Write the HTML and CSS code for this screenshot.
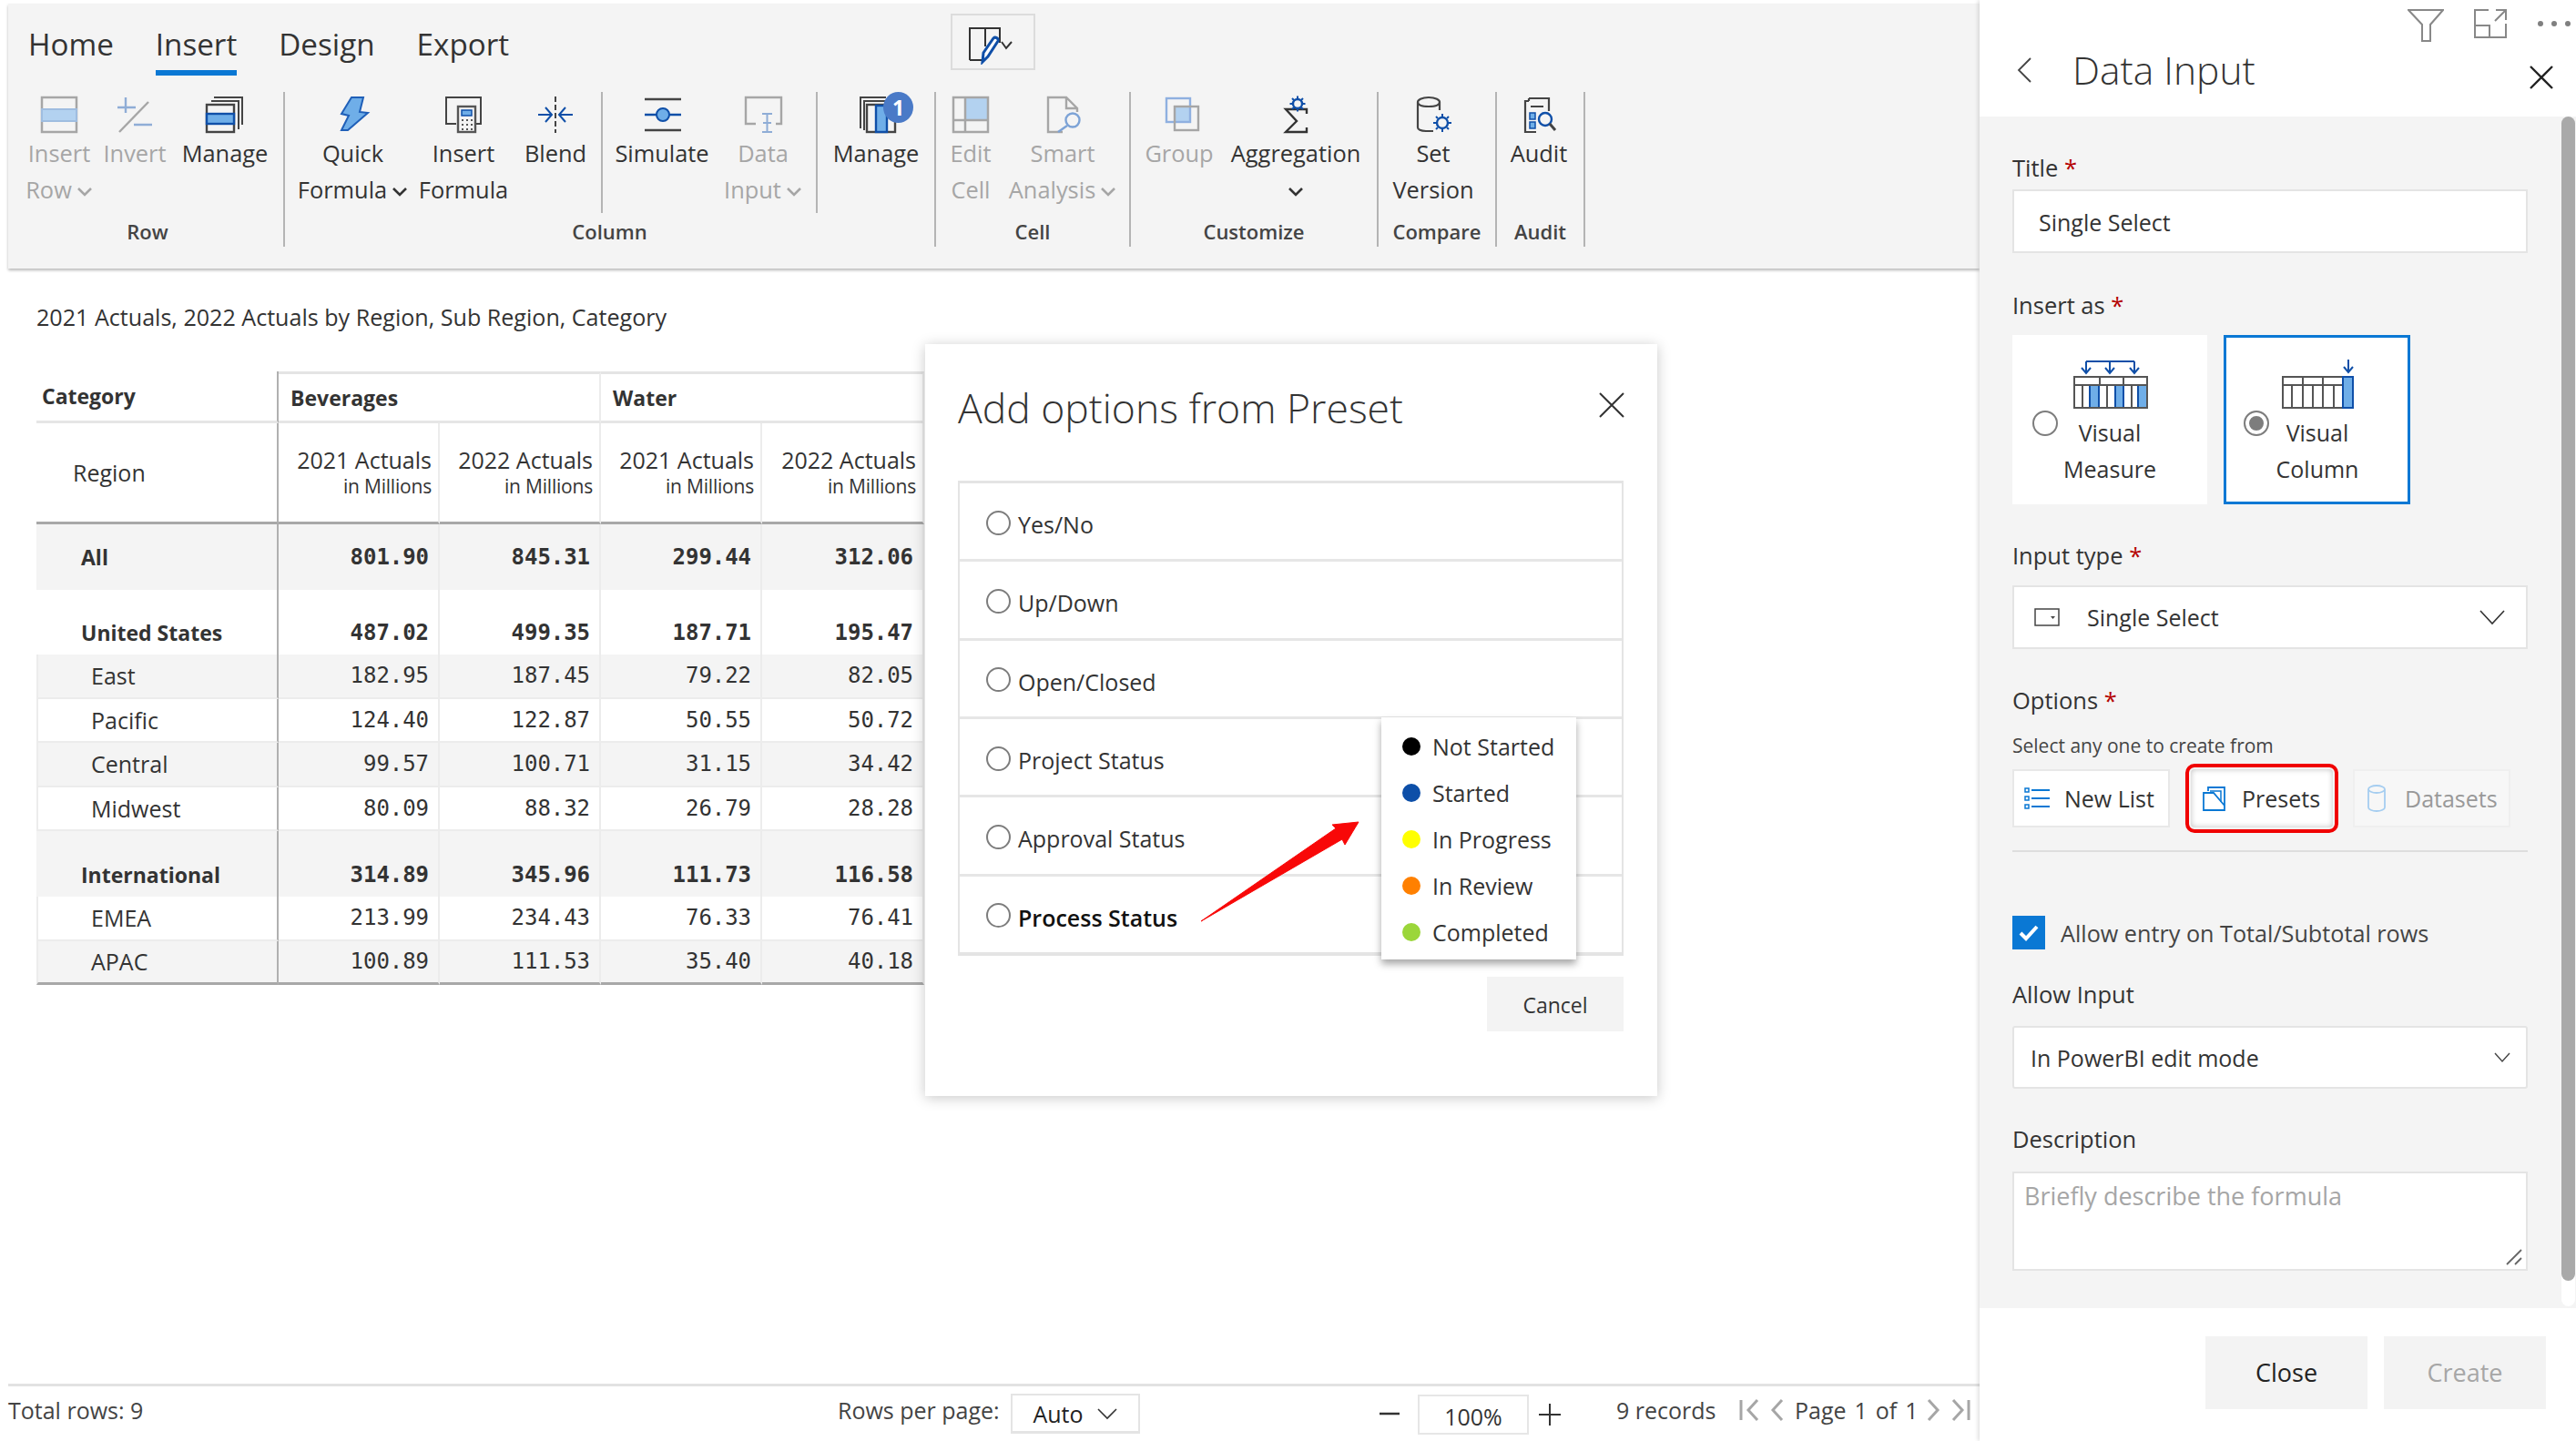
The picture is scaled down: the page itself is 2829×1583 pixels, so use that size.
FILE: index.html
```html
<!DOCTYPE html>
<html lang="en">
<head>
<meta charset="utf-8">
<title>Data Input</title>
<link rel="stylesheet" href="styles.css">
</head>
<body>
<div class="app">
  <main class="main">
    <header class="ribbon">
      <div class="tabs">
        <span class="tab">Home</span>
        <span class="tab tab--active">Insert</span>
        <span class="tab">Design</span>
        <span class="tab">Export</span>
        <button class="toolbox">
          <svg width="62" height="44" viewBox="0 0 62 44" fill="none"><path d="M9 39V4H42V20M9 39H23M26 4V24" stroke="#333" stroke-width="2"/><path d="M23 41l1-10 11-16c2-2 6 0 5 3L29 35z" fill="#fff" stroke="#0f4fa8" stroke-width="3"/><path d="M44 19l5 7 6-7" stroke="#333" stroke-width="2"/></svg>
        </button>
      </div>
      <div class="groups">
        <section class="group g-row">
          <div class="items">
            <div class="item w80 off">
              <svg class="ico" viewBox="0 0 50 48" fill="none"><rect x="6" y="6" width="38" height="38" stroke="#a6a6a6" stroke-width="2.5"/><rect x="6" y="19" width="38" height="13" fill="#b3d2f0" stroke="#9fbde0" stroke-width="2"/></svg>
              <span>Insert</span><span>Row<svg class="chev" viewBox="0 0 18 12"><path d="M2 2l7 7 7-7" fill="none" stroke="currentColor" stroke-width="2.6"/></svg></span>
            </div>
            <div class="item w86 off">
              <svg class="ico" viewBox="0 0 50 48" fill="none"><path d="M6 17H26M15 6V23M24 36H44" stroke="#8fadd6" stroke-width="2.4"/><path d="M8 44L40 11" stroke="#a6a6a6" stroke-width="2.4"/></svg>
              <span>Invert</span>
            </div>
            <div class="item w112">
              <svg class="ico" viewBox="0 0 50 48" fill="none"><path d="M13 6H44V36M10 10H40V41" stroke="#444" stroke-width="2"/><rect x="5" y="14" width="30" height="30" fill="#f4f4f4" stroke="#444" stroke-width="2.4"/><rect x="5" y="24" width="30" height="11" fill="#6faee8" stroke="#0f4fa8" stroke-width="2.4"/></svg>
              <span>Manage</span>
            </div>
          </div>
          <div class="glabel">Row</div>
        </section>
        <section class="group g-col">
          <div class="items">
            <div class="item w149">
              <svg class="ico" viewBox="0 0 50 48" fill="none"><path d="M23 6H36L32 22L41 23L19 42H12L20 26L12 24Z" fill="#6faee8" stroke="#1f5fb8" stroke-width="2"/></svg>
              <span>Quick</span><span>Formula<svg class="chev" viewBox="0 0 18 12"><path d="M2 2l7 7 7-7" fill="none" stroke="currentColor" stroke-width="2.6"/></svg></span>
            </div>
            <div class="item w94">
              <svg class="ico" viewBox="0 0 50 48" fill="none"><path d="M17 35H6V6H44V35H39" stroke="#444" stroke-width="2"/><rect x="19" y="16" width="19" height="28" fill="#f4f4f4" stroke="#555" stroke-width="2.4"/><rect x="23" y="20" width="11" height="6" fill="#6faee8" stroke="#0f4fa8" stroke-width="1.5"/><path d="M23 31h2M28 31h2M33 31h2M23 36h2M28 36h2M33 36h2M23 41h2M28 41h2M33 41h2" stroke="#555" stroke-width="2"/></svg>
              <span>Insert</span><span>Formula</span>
            </div>
            <div class="item w100">
              <svg class="ico" viewBox="0 0 50 48" fill="none"><path d="M25 5V45" stroke="#444" stroke-width="2" stroke-dasharray="6 3"/><path d="M6 25H20M14 17L21 25L14 33M44 25H30M36 17L29 25L36 33" stroke="#0f4fa8" stroke-width="2"/></svg>
              <span>Blend</span>
            </div>
            <i class="sep"></i>
            <div class="item w130">
              <svg class="ico" viewBox="0 0 50 48" fill="none"><path d="M6 8H46M6 42H46" stroke="#444" stroke-width="2.4"/><path d="M6 25H46" stroke="#0f4fa8" stroke-width="2.4"/><circle cx="26" cy="25" r="7" fill="#6faee8" stroke="#0f4fa8" stroke-width="2"/></svg>
              <span>Simulate</span>
            </div>
            <div class="item w92 off">
              <svg class="ico" viewBox="0 0 50 48" fill="none"><path d="M17 35H6V6H45V35H39" stroke="#a6a6a6" stroke-width="2.4"/><path d="M24 24H35M24 44H35M29.500 24V44M25 34H34" stroke="#8fadd6" stroke-width="2"/></svg>
              <span>Data</span><span>Input<svg class="chev" viewBox="0 0 18 12"><path d="M2 2l7 7 7-7" fill="none" stroke="currentColor" stroke-width="2.6"/></svg></span>
            </div>
            <i class="sep sep--gap"></i>
            <div class="item w128 has-badge">
              <svg class="ico" viewBox="0 0 50 48" fill="none"><path d="M8 40V6H36M12 42V10H36" stroke="#444" stroke-width="2"/><rect x="15" y="14" width="31" height="30" fill="#f4f4f4" stroke="#444" stroke-width="2.4"/><rect x="25" y="15" width="12" height="29" fill="#6faee8" stroke="#0f4fa8" stroke-width="2.4"/></svg>
              <b class="badge">1</b>
              <span>Manage</span>
            </div>
          </div>
          <div class="glabel">Column</div>
        </section>
        <section class="group g-cell">
          <div class="items">
            <div class="item w76 off">
              <svg class="ico" viewBox="0 0 50 48" fill="none"><rect x="19" y="7" width="25" height="24" fill="#b3d2f0"/><rect x="6" y="6" width="38" height="38" stroke="#a6a6a6" stroke-width="2.5"/><path d="M19 6V44M6 31H44" stroke="#a6a6a6" stroke-width="2.5"/></svg>
              <span>Edit</span><span>Cell</span>
            </div>
            <div class="item w126 off">
              <svg class="ico" viewBox="0 0 50 48" fill="none"><path d="M25 44H9V6H29L41 18V22M29 6V18H41" stroke="#a6a6a6" stroke-width="2.4"/><circle cx="36" cy="31" r="7.500" stroke="#7da3d6" stroke-width="2.400"/><path d="M30 37L20 44" stroke="#7da3d6" stroke-width="2.4"/></svg>
              <span>Smart</span><span>Analysis<svg class="chev" viewBox="0 0 18 12"><path d="M2 2l7 7 7-7" fill="none" stroke="currentColor" stroke-width="2.6"/></svg></span>
            </div>
          </div>
          <div class="glabel">Cell</div>
        </section>
        <section class="group g-custom">
          <div class="items">
            <div class="item w106 off">
              <svg class="ico" viewBox="0 0 50 48" fill="none"><rect x="20" y="16" width="17" height="17" fill="#b3d2f0"/><rect x="11" y="7" width="26" height="26" stroke="#8fb0e0" stroke-width="2.4"/><rect x="20" y="16" width="26" height="26" stroke="#a6a6a6" stroke-width="2.4"/></svg>
              <span>Group</span>
            </div>
            <div class="item w150">
              <svg class="ico" viewBox="0 0 50 48" fill="none"><path d="M37 24V19H14L26 32L14 44H37V39" stroke="#333" stroke-width="2.4"/><circle cx="27" cy="13" r="5" stroke="#0f4fa8" stroke-width="2.400"/><path d="M27 4.500V7M27 19V21.500M18.500 13H21M33 13H35.500M21 7L23 9M33 7L31 9M21 19L23 17M33 19L31 17" stroke="#0f4fa8" stroke-width="2"/></svg>
              <span>Aggregation</span><span class="dark-chev"><svg class="chev" viewBox="0 0 18 12"><path d="M2 2l7 7 7-7" fill="none" stroke="currentColor" stroke-width="2.6"/></svg></span>
            </div>
          </div>
          <div class="glabel">Customize</div>
        </section>
        <section class="group g-compare">
          <div class="items">
            <div class="item w120">
              <svg class="ico" viewBox="0 0 50 48" fill="none"><path d="M25 43H17C11 43 8 41 8 39V11C8 9 12 6 20 6S32 9 32 11V20M8 11C8 14 12 16 20 16S32 14 32 11" stroke="#444" stroke-width="2.2"/><circle cx="35" cy="34" r="6" stroke="#0f4fa8" stroke-width="2.400"/><path d="M35 24V27M35 41V44M25 34H28M42 34H45M28 27L30 29M42 27L40 29M28 41L30 39M42 41L40 39" stroke="#0f4fa8" stroke-width="2"/></svg>
              <span>Set</span><span>Version</span>
            </div>
          </div>
          <div class="glabel">Compare</div>
        </section>
        <section class="group g-audit">
          <div class="items">
            <div class="item w92">
              <svg class="ico" viewBox="0 0 50 48" fill="none"><path d="M14 7H36V21M14 7V10M22 44H10V10H14M16 16H30" stroke="#444" stroke-width="2.200"/><path d="M15 23H21V30H15ZM15 33H21V40H15Z" fill="#6faee8" stroke="#0f4fa8" stroke-width="1.500"/><circle cx="32" cy="30" r="7" fill="#f4f4f4" stroke="#0f4fa8" stroke-width="2.400"/><path d="M37 35L43 42" stroke="#444" stroke-width="3"/></svg>
              <span>Audit</span>
            </div>
          </div>
          <div class="glabel">Audit</div>
        </section>
      </div>
    </header>

    <section class="content">
      <h2 class="report-title">2021 Actuals, 2022 Actuals by Region, Sub Region, Category</h2>
      <table class="grid">
        <colgroup><col class="c0"><col class="c1"><col class="c2"><col class="c3"><col class="c4"></colgroup>
        <thead>
          <tr class="h1">
            <th class="lab cat">Category</th>
            <th class="grp" colspan="2">Beverages</th>
            <th class="grp" colspan="2">Water</th>
          </tr>
          <tr class="h2">
            <th class="lab reg">Region</th>
            <th class="meas">2021 Actuals<small>in Millions</small></th>
            <th class="meas">2022 Actuals<small>in Millions</small></th>
            <th class="meas">2021 Actuals<small>in Millions</small></th>
            <th class="meas">2022 Actuals<small>in Millions</small></th>
          </tr>
        </thead>
        <tbody>
          <tr class="total shade tall"><td class="lab">All</td><td>801.90</td><td>845.31</td><td>299.44</td><td>312.06</td></tr>
          <tr class="total gapped"><td class="lab">United States</td><td>487.02</td><td>499.35</td><td>187.71</td><td>195.47</td></tr>
          <tr class="leaf shade"><td class="lab">East</td><td>182.95</td><td>187.45</td><td>79.22</td><td>82.05</td></tr>
          <tr class="leaf"><td class="lab">Pacific</td><td>124.40</td><td>122.87</td><td>50.55</td><td>50.72</td></tr>
          <tr class="leaf shade"><td class="lab">Central</td><td>99.57</td><td>100.71</td><td>31.15</td><td>34.42</td></tr>
          <tr class="leaf"><td class="lab">Midwest</td><td>80.09</td><td>88.32</td><td>26.79</td><td>28.28</td></tr>
          <tr class="total gapped shade"><td class="lab">International</td><td>314.89</td><td>345.96</td><td>111.73</td><td>116.58</td></tr>
          <tr class="leaf"><td class="lab">EMEA</td><td>213.99</td><td>234.43</td><td>76.33</td><td>76.41</td></tr>
          <tr class="leaf shade last"><td class="lab">APAC</td><td>100.89</td><td>111.53</td><td>35.40</td><td>40.18</td></tr>
        </tbody>
      </table>
    </section>

    <footer class="statusbar">
      <span class="total-rows">Total rows: 9</span>
      <span class="rpp">Rows per page:</span>
      <span class="auto">Auto<svg width="24" height="14" viewBox="0 0 24 14"><path d="M2 2l10 10L22 2" fill="none" stroke="#333" stroke-width="1.600"/></svg></span>
      <svg class="zoom-minus" width="24" height="24" viewBox="0 0 24 24"><path d="M1 12H23" stroke="#333" stroke-width="2.500"/></svg>
      <span class="zoom-val">100%</span>
      <svg class="zoom-plus" width="26" height="26" viewBox="0 0 26 26"><path d="M1 13H25M13 1V25" stroke="#333" stroke-width="2"/></svg>
      <span class="records">9 records</span>
      <svg class="pg pg-first" width="26" height="28" viewBox="0 0 26 28" fill="none"><path d="M2 3V25" stroke="#a6a6a6" stroke-width="3"/><path d="M20 3L10 14L20 25" stroke="#a6a6a6" stroke-width="3"/></svg>
      <svg class="pg pg-prev" width="18" height="28" viewBox="0 0 18 28" fill="none"><path d="M14 3L4 14L14 25" stroke="#a6a6a6" stroke-width="3"/></svg>
      <span class="page-of">Page 1 of 1</span>
      <svg class="pg pg-next" width="18" height="28" viewBox="0 0 18 28" fill="none"><path d="M4 3L14 14L4 25" stroke="#a6a6a6" stroke-width="3"/></svg>
      <svg class="pg pg-last" width="24" height="28" viewBox="0 0 24 28" fill="none"><path d="M3 3L13 14L3 25" stroke="#a6a6a6" stroke-width="3"/><path d="M20 3V25" stroke="#a6a6a6" stroke-width="3"/></svg>
    </footer>
  </main>

  <aside class="panel">
    <div class="panel-tools">
      <svg width="40" height="36" viewBox="0 0 40 36" fill="none"><path d="M1 1H39L25 17V35H16V17Z" stroke="#888" stroke-width="2"/></svg>
      <svg width="36" height="32" viewBox="0 0 36 32" fill="none"><path d="M16 1H1V31H35V16M1 18H17V31M24 1H35V12M35 1L23 13" stroke="#888" stroke-width="2"/></svg>
      <svg class="dots" width="38" height="8" viewBox="0 0 38 8"><circle cx="4" cy="4" r="3" fill="#808080"/><circle cx="19" cy="4" r="3" fill="#808080"/><circle cx="34" cy="4" r="3" fill="#808080"/></svg>
    </div>
    <div class="panel-head">
      <svg class="back" width="16" height="28" viewBox="0 0 16 28" fill="none"><path d="M15 1L2 14L15 27" stroke="#444" stroke-width="1.800"/></svg>
      <h1 class="panel-title">Data Input</h1>
      <svg class="panel-x" width="28" height="28" viewBox="0 0 28 28" fill="none"><path d="M2 2L26 26M26 2L2 26" stroke="#222" stroke-width="2.400"/></svg>
    </div>
    <div class="panel-body">
      <div class="scrollbar"><i></i></div>
      <label class="flabel m-title">Title <em>*</em></label>
      <div class="fbox fbox-title">Single Select</div>

      <label class="flabel m-gap">Insert as <em>*</em></label>
      <div class="cards">
        <div class="card">
          <span class="radio"></span>
          <div class="card-main">
            <svg class="measure-ico" width="84" height="56" viewBox="0 0 84 56" fill="none"><path d="M14 3V14M40 3V14M67 3V14M14 3H67" stroke="#0f4fa8" stroke-width="2"/><path d="M9 10L14 16L19 10M35 10L40 16L45 10M62 10L67 16L72 10" stroke="#0f4fa8" stroke-width="2"/><path d="M18 29H28V54H18ZM46 29H55V54H46ZM71 29H81V54H71Z" fill="#6faee8" stroke="#0f4fa8" stroke-width="2"/><path d="M1 20H81V54H1ZM1 29H81M29 20V29M55 20V29M10 29V54M37 29V54M64 29V54" stroke="#555" stroke-width="2"/></svg>
            <span>Visual</span><span>Measure</span>
          </div>
        </div>
        <div class="card card--on">
          <span class="radio radio--on"></span>
          <div class="card-main">
            <svg class="measure-ico" width="84" height="56" viewBox="0 0 84 56" fill="none"><path d="M74 1V14M69 9L74 15L79 9" stroke="#0f4fa8" stroke-width="2"/><path d="M2 20H68V54H2ZM2 29H68M24 20V29M46 20V29M12 29V54M24 29V54M35 29V54M46 29V54M58 29V54" stroke="#555" stroke-width="2"/><rect x="68" y="20" width="11" height="34" fill="#6faee8" stroke="#0f4fa8" stroke-width="2"/></svg>
            <span>Visual</span><span>Column</span>
          </div>
        </div>
      </div>

      <label class="flabel m-type">Input type <em>*</em></label>
      <div class="fbox fbox-select">
        <svg class="sel-ico" width="28" height="20" viewBox="0 0 28 20" fill="none"><rect x="1" y="1" width="26" height="18" stroke="#444" stroke-width="1.500"/><path d="M18 9h5l-2.500 3z" fill="#444"/></svg>
        <span>Single Select</span>
        <svg class="sel-chev" width="28" height="18" viewBox="0 0 28 18" fill="none"><path d="M1 2L14 16L27 2" stroke="#333" stroke-width="1.600"/></svg>
      </div>

      <label class="flabel m-options">Options <em>*</em></label>
      <p class="hint">Select any one to create from</p>
      <div class="sources">
        <div class="src src-new">
          <svg width="28" height="24" viewBox="0 0 28 24" fill="none"><path d="M8 3H28M8 12H28M8 21H28" stroke="#0a78d4" stroke-width="1.800"/><path d="M1 1h4v4H1zM1 10h4v4H1zM1 19h4v4H1z" stroke="#0a78d4" stroke-width="1.500"/></svg>
          New List
        </div>
        <div class="src src-presets">
          <svg width="26" height="28" viewBox="0 0 26 28" fill="none"><path d="M6 6V2H24V27M1 27V8H12L24 22V27Z" stroke="#0a78d4" stroke-width="1.800"/><path d="M8 6H20V18" stroke="#0a78d4" stroke-width="1.500"/></svg>
          Presets
        </div>
        <div class="src src-data">
          <svg width="20" height="30" viewBox="0 0 20 30" fill="none"><path d="M1 5V25C1 27 5 29 10 29S19 27 19 25V5C19 3 15 1 10 1S1 3 1 5ZM1 5C1 7 5 9 10 9S19 7 19 5" stroke="#a5cdf0" stroke-width="1.800"/></svg>
          Datasets
        </div>
      </div>
      <hr class="rule">

      <div class="check">
        <span class="checkbox"><svg width="24" height="20" viewBox="0 0 24 20" fill="none"><path d="M3 10L9 16L21 3" stroke="#fff" stroke-width="4"/></svg></span>
        <span>Allow entry on Total/Subtotal rows</span>
      </div>

      <label class="flabel m-allow">Allow Input</label>
      <div class="fbox fbox-allow">
        <span>In PowerBI edit mode</span>
        <svg width="18" height="12" viewBox="0 0 18 12" fill="none"><path d="M1 1L9 10L17 1" stroke="#444" stroke-width="1.400"/></svg>
      </div>

      <label class="flabel m-desc">Description</label>
      <div class="fbox fbox-desc">
        <span>Briefly describe the formula</span>
        <svg class="resize" width="18" height="18" viewBox="0 0 18 18" fill="none"><path d="M1 17L17 1M10 17L17 10" stroke="#666" stroke-width="1.800"/></svg>
      </div>
    </div>
    <div class="panel-foot">
      <span class="btn">Close</span>
      <span class="btn btn--off">Create</span>
    </div>
  </aside>

  <div class="modal">
    <div class="modal-head">
      <h2 class="modal-title">Add options from Preset</h2>
      <svg width="28" height="28" viewBox="0 0 28 28" fill="none"><path d="M1 1L27 27M27 1L1 27" stroke="#333" stroke-width="2"/></svg>
    </div>
    <div class="preset-list">
      <div class="preset"><span class="radio radio--sm"></span><span class="ptext">Yes/No</span></div>
      <div class="preset"><span class="radio radio--sm"></span><span class="ptext">Up/Down</span></div>
      <div class="preset"><span class="radio radio--sm"></span><span class="ptext">Open/Closed</span></div>
      <div class="preset"><span class="radio radio--sm"></span><span class="ptext">Project Status</span></div>
      <div class="preset"><span class="radio radio--sm"></span><span class="ptext">Approval Status</span></div>
      <div class="preset"><span class="radio radio--sm"></span><span class="ptext ptext--strong">Process Status</span></div>
      <svg class="arrow" width="180" height="114" viewBox="0 0 180 114"><path d="M1 111L149 9L145 5L174 2L159 27L156 21Z" fill="#f80808" stroke="#f80808" stroke-width="1"/></svg>
      <ul class="legend">
        <li><i class="dot d1"></i>Not Started</li>
        <li><i class="dot d2"></i>Started</li>
        <li><i class="dot d3"></i>In Progress</li>
        <li><i class="dot d4"></i>In Review</li>
        <li><i class="dot d5"></i>Completed</li>
      </ul>
    </div>
    <div class="modal-foot"><span class="btn-cancel">Cancel</span></div>
  </div>
</div>
</body>
</html>
```

FILE: styles.css
```css
* { box-sizing: border-box; }
html, body { margin: 0; padding: 0; height: 100%; }
body { background: #fff; color: #333; font-family: "Open Sans", "Noto Sans", sans-serif; font-size: 25px; overflow: hidden; }
h1, h2, p, ul { margin: 0; padding: 0; font-weight: 400; }

.app { position: relative; display: flex; width: 2829px; height: 1583px; overflow: hidden; }
.main { width: 2174px; height: 1583px; display: flex; flex-direction: column; }

/* ribbon */
.ribbon { margin: 4px 0 0 9px; height: 291px; background: #f4f4f4; box-shadow: 0 2px 3px rgba(0,0,0,.28); position: relative; z-index: 1; }
.tabs { display: flex; height: 97px; padding-left: 22px; gap: 46px; }
.tab { height: 79px; padding-top: 23px; font-size: 33.200px; line-height: 44px; color: #333; }
.tab--active { border-bottom: 6px solid #0a78d4; height: 79px; }
.toolbox { margin: 11px 0 0 439px; width: 93px; height: 62px; background: #f4f4f4; border: 2px solid #dcdcdc; padding: 5px 0 0 8px; display: block; }
.toolbox svg { display: block; margin-left: 2px; }
.groups { display: flex; height: 170px; }
.group { height: 170px; border-right: 2px solid #b4b4b4; flex: none; }
.g-row { width: 304px; padding-left: 16px; }
.g-col { width: 715px; }
.g-cell { width: 214px; }
.g-custom { width: 272px; }
.g-compare { width: 130px; }
.g-audit { width: 97px; }
.items { display: flex; height: 133px; }
.item { flex: none; display: flex; flex-direction: column; align-items: center; font-size: 25.400px; line-height: 40px; color: #333; position: relative; white-space: nowrap; }
.item > span { display: block; height: 40px; }
.item.off { color: #a6a6a6; }
.ico { width: 50px; height: 48px; flex: none; margin-bottom: -1px; }
.chev { width: 18px; height: 12px; margin-left: 5px; vertical-align: 1px; }
.dark-chev .chev { margin-left: 0; }
.w76 { width: 76px; } .w80 { width: 80px; } .w86 { width: 86px; } .w92 { width: 92px; } .w94 { width: 94px; }
.w100 { width: 100px; margin-left: 4px; } .w106 { width: 106px; } .w112 { width: 112px; } .w120 { width: 120px; }
.w126 { width: 126px; } .w128 { width: 128px; } .w130 { width: 130px; } .w149 { width: 149px; } .w150 { width: 150px; }
.sep { flex: none; width: 2px; height: 133px; background: #b4b4b4; }
.sep--gap { margin-left: 12px; }
.glabel { height: 37px; text-align: center; font-size: 22px; font-weight: 600; line-height: 40px; color: #444; }
.g-row .glabel { padding-right: 12px; }
.badge { position: absolute; left: 72px; top: 0; width: 33px; height: 34px; border-radius: 50%; background: #4a7ac7; color: #fff; font-size: 23px; font-weight: 700; line-height: 34px; text-align: center; }

/* report */
.content { flex: 1; position: relative; padding: 31px 0 0 40px; min-height: 0; overflow: hidden; }
.report-title { font-size: 25.100px; line-height: 44px; height: 44px; color: #333; }
.grid { margin-top: 38px; border-collapse: separate; border-spacing: 0; table-layout: fixed; width: 975px; }
.c0 { width: 266px; } .c1 { width: 177px; } .c2 { width: 177px; } .c3 { width: 177px; } .c4 { width: 178px; }
.grid th, .grid td { padding: 0; border-right: 2px solid #ececec; font-weight: 400; }
.grid .lab { border-right: 2px solid #b0b0b0; text-align: left; }
.h1 th { height: 57px; border-top: 3px solid #e4e4e4; border-bottom: 3px solid #e6e6e6; font-size: 23px; font-weight: 700; color: #333; vertical-align: middle; }
.h1 .lab.cat { border-top: 0; font-weight: 700; padding-left: 6px; }
.h1 .grp { text-align: left; padding-left: 13px; }
.h2 th { height: 111px; border-bottom: 3px solid #a8a8a8; }
.h2 .lab.reg { padding-left: 40px; font-size: 25px; vertical-align: middle; }
.meas { font-size: 25px; line-height: 30px; text-align: right; padding-right: 7px !important; vertical-align: middle; }
.meas small { display: block; font-size: 21px; letter-spacing: -.2px; line-height: 28px; }
.grid td { font-family: "DejaVu Sans Mono", "Liberation Mono", monospace; font-size: 24px; letter-spacing: -.05px; text-align: right; padding-right: 10px; color: #333; }
.grid td.lab { font-family: "Open Sans", sans-serif; letter-spacing: 0; }
.shade td { background: #f4f4f4; }
.total td { font-weight: 700; }
.total td.lab { font-size: 23px; padding-left: 49px; }
.tall td { height: 72px; }
.gapped td { height: 71px; vertical-align: bottom; padding-bottom: 7px; line-height: 34px; }
.gapped.shade td { height: 72px; }
.leaf td { height: 48.500px; border-bottom: 2px solid #ececec; }
.leaf td.lab { padding-left: 58px; font-size: 25px; border-left: 2px solid #ececec; }
.leaf.last td { border-bottom: 3px solid #a8a8a8; }

/* status */
.statusbar { margin-left: 9px; height: 63px; border-top: 3px solid #e2e2e2; display: flex; align-items: center; font-size: 25px; color: #444; position: relative; padding-bottom: 8px; }
.total-rows { width: 911px; flex: none; }
.rpp { width: 190px; flex: none; }
.auto { flex: none; width: 142px; height: 44px; margin-top: 8px; border: 2px solid #e4e4e4; border-bottom-width: 3px; display: flex; align-items: center; justify-content: center; gap: 14px; color: #222; background: #fff; }
.zoom-minus { flex: none; margin-left: 262px; margin-top: 8px; }
.zoom-val { flex: none; margin-left: 19px; margin-top: 10px; width: 122px; height: 44px; border: 2px solid #e6e6e6; text-align: center; line-height: 44px; color: #333; }
.zoom-plus { flex: none; margin-left: 10px; margin-top: 10px; }
.records { flex: none; margin-left: 60px; width: 135px; }
.pg { flex: none; }
.pg-prev { margin-left: 7px; }
.page-of { flex: none; margin: 0 7px 0 10px; word-spacing: 2.500px; }
.pg-last { margin-left: 10px; }

/* side panel */
.panel { width: 655px; height: 1583px; flex: none; display: flex; flex-direction: column; background: #fff; box-shadow: -2px 0 4px rgba(0,0,0,.12); position: relative; z-index: 2; }
.panel-tools { height: 52px; padding: 10px 5px 0 0; display: flex; justify-content: flex-end; gap: 33px; align-items: flex-start; }
.dots { margin-top: 12px; }
.panel-head { height: 76px; display: flex; align-items: flex-start; padding: 0 0 0 41px; }
.back { margin-top: 11px; }
.panel-title { font-size: 42.500px; font-weight: 300; line-height: 50px; margin-left: 45px; color: #333; width: 501px; }
.panel-x { margin-top: 19px; }
.panel-body { height: 1309px; background: #f4f4f4; padding-left: 36px; position: relative; overflow: hidden; }
.scrollbar { position: absolute; right: 1px; top: 0; width: 15px; height: 1307px; background: #fff; border-radius: 8px; }
.scrollbar i { display: block; height: 1279px; background: #a9a9a9; border-radius: 8px; }
.flabel { display: block; width: 566px; font-size: 25.500px; line-height: 32px; height: 34px; color: #333; }
.flabel em { color: #b40000; font-style: normal; }
.m-title { margin-top: 40px; }
.m-title + .fbox { margin-top: 6px; }
.m-gap { margin-top: 41px; }
.m-type { margin-top: 40px; }
.m-options { margin-top: 40px; }
.m-allow { margin-top: 33px; }
.m-desc { margin-top: 39px; }
.fbox { width: 566px; background: #fff; border: 2px solid #e4e4e4; display: flex; align-items: center; color: #333; }
.fbox-title { height: 70px; padding: 1px 0 0 27px; }
.cards { display: flex; gap: 18px; height: 186px; margin-top: 15px; }
.card { position: relative; width: 214px; height: 186px; background: #fff; }
.card--on { width: 205px; border: 3px solid #0a78d4; }
.card-main { position: absolute; left: 65px; top: 26px; display: flex; flex-direction: column; align-items: center; width: 84px; line-height: 40px; color: #333; }
.card--on .card-main { left: 58px; top: 23px; }
.card-main svg { display: block; margin-bottom: 5px; flex: none; }
.measure-ico { transform: translateX(2px); }
.card-main span { display: block; height: 40px; white-space: nowrap; }
.radio { display: block; width: 28px; height: 28px; border-radius: 50%; border: 2.500px solid #7d7d7d; background: #fff; flex: none; }
.card > .radio { position: absolute; left: 22px; top: 83px; }
.card--on > .radio { left: 19px; top: 80px; }
.radio--on { box-shadow: inset 0 0 0 4px #fff, inset 0 0 0 14px #7d7d7d; }
.fbox-select { height: 70px; margin-top: 15px; padding-left: 22px; }
.sel-ico { margin-right: 30px; }
.sel-chev { margin-left: auto; margin-right: 23px; }
.hint { font-size: 21px; line-height: 30px; margin-top: 17px; color: #444; }
.sources { display: flex; margin-top: 11px; height: 64px; }
.src { height: 64px; display: flex; align-items: center; background: #fff; border: 2px solid #e8e8e8; color: #333; font-size: 25px; flex: none; }
.src-new { width: 173px; padding-left: 11px; gap: 16px; }
.src-presets { width: 156px; margin-left: 23px; padding-left: 13px; gap: 17px; border: 0; outline: 4px solid #f00000; outline-offset: 2px; border-radius: 4px; box-shadow: inset 0 0 6px rgba(0,0,0,.25); }
.src-data { width: 173px; margin-left: 22px; padding-left: 14px; gap: 21px; color: #999; background: #f7f7f7; border-color: #efefef; }
.rule { width: 566px; margin: 25px 0 0; border: 0; border-top: 2px solid #dedede; height: 0; }
.check { display: flex; align-items: center; margin-top: 70px; height: 37px; color: #444; font-size: 25.200px; }
.checkbox { width: 36px; height: 37px; background: #0a78d4; margin-right: 17px; display: flex; align-items: center; justify-content: center; flex: none; }
.fbox-allow { height: 69px; margin-top: 17px; padding: 0 17px 0 18px; justify-content: space-between; border-radius: 3px; }
.fbox-desc { height: 109px; margin-top: 18px; padding: 7px 4px 4px 11px; justify-content: space-between; align-items: flex-start; color: #a6a6a6; font-size: 27px; line-height: 36px; }
.resize { align-self: flex-end; }
.panel-foot { flex: 1; display: flex; justify-content: flex-end; gap: 18px; padding: 31px 33px 0 0; }
.btn { width: 178px; height: 80px; background: #f3f3f3; text-align: center; line-height: 80px; font-size: 27px; font-weight: 500; color: #222; }
.btn--off { color: #a6a6a6; }

/* modal */
.modal { position: absolute; left: 1016px; top: 378px; width: 804px; height: 826px; background: #fff; box-shadow: 0 2px 14px rgba(0,0,0,.22); padding: 35px 37px 0 36px; z-index: 3; }
.modal-head { height: 70px; display: flex; justify-content: space-between; align-items: flex-start; }
.modal-head svg { margin-top: 18px; margin-right: -1px; flex: none; }
.modal-title { font-size: 44.500px; font-weight: 300; line-height: 70px; color: #333; }
.preset-list { position: relative; margin-top: 45px; height: 522px; border: 2px solid #e4e4e4; border-top-width: 3px; border-bottom-width: 4px; display: flex; flex-direction: column; }
.preset { flex: 1; display: flex; align-items: center; padding: 0 0 0 29px; border-bottom: 3px solid #e6e6e6; gap: 8px; font-size: 25px; color: #333; }
.preset:nth-child(6) { border-bottom: 0; }
.radio--sm { width: 27px; height: 27px; margin-top: 3px; }
.ptext { margin-top: 7px; }
.ptext--strong { font-weight: 600; color: #111; }
.arrow { position: absolute; left: 264px; top: 370px; }
.legend { position: absolute; left: 463px; top: 257px; width: 214px; height: 266px; background: #fff; list-style: none; box-shadow: 0 5px 8px rgba(0,0,0,.35); padding: 7px 0 0 23px; }
.legend li { display: flex; align-items: center; height: 50.900px; font-size: 25px; color: #333; }
.dot { width: 20px; height: 20px; border-radius: 50%; margin-right: 13px; flex: none; }
.d1 { background: #000; } .d2 { background: #0d4fa8; } .d3 { background: #ffff00; } .d4 { background: #ff8000; } .d5 { background: #9bd63a; }
.modal-foot { display: flex; justify-content: flex-end; margin-top: 23px; }
.btn-cancel { width: 150px; height: 60px; background: #f3f3f3; text-align: center; line-height: 62px; font-size: 23px; font-weight: 500; color: #333; }
```
